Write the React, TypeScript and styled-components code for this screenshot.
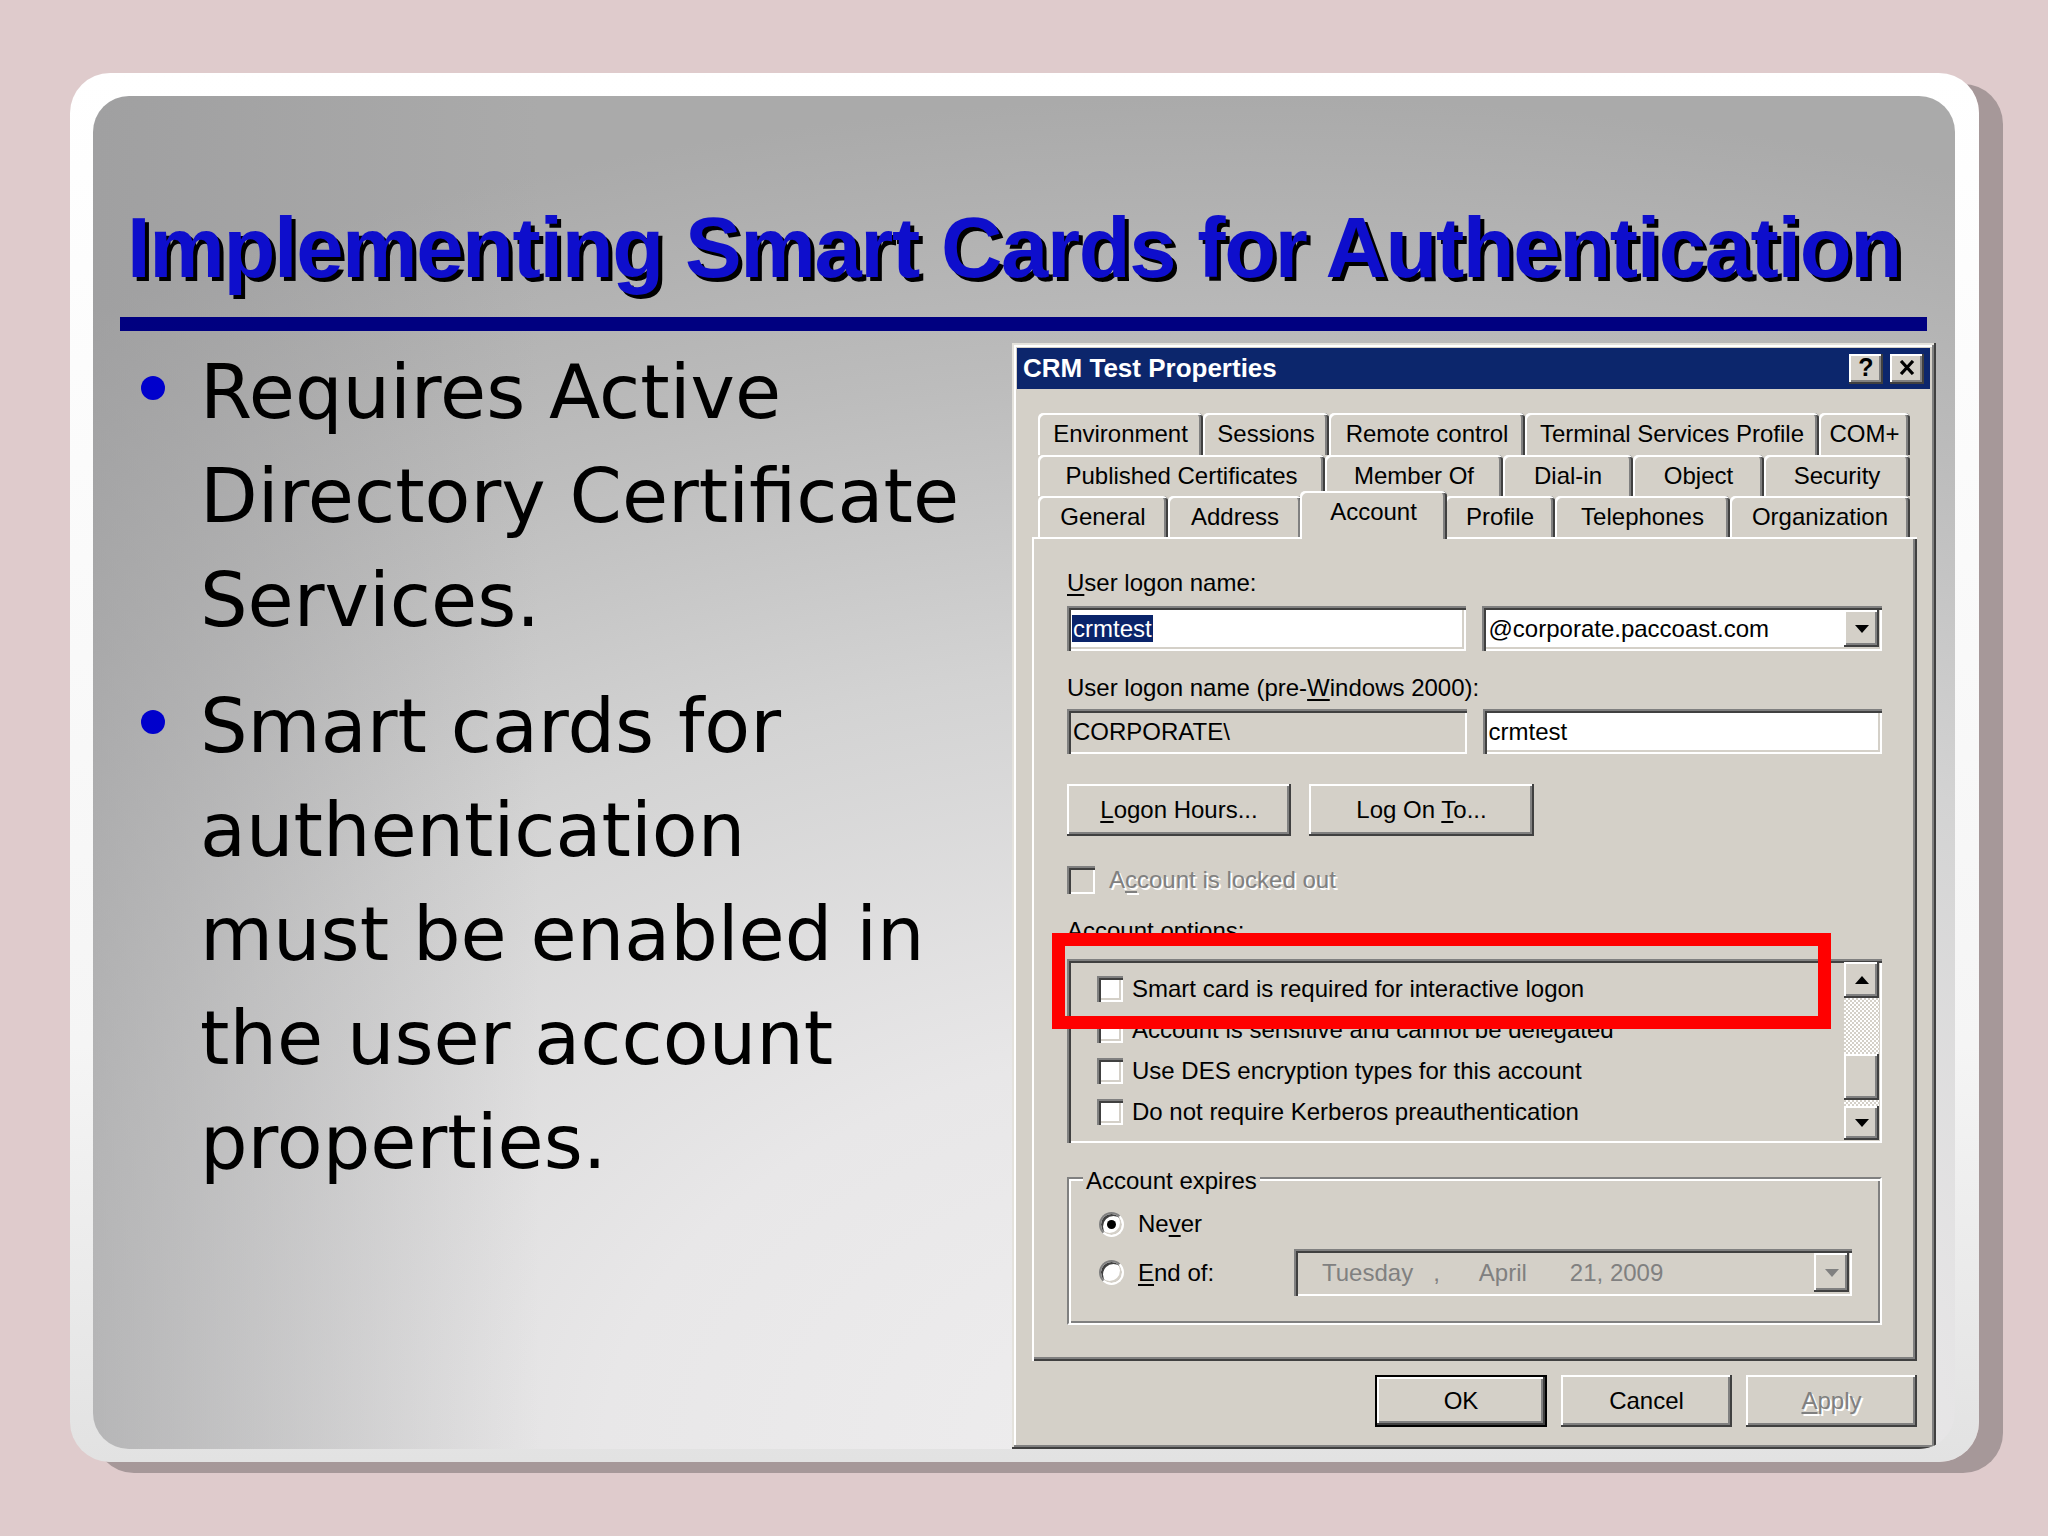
import React from "react";
import styled, { createGlobalStyle, css } from "styled-components";

const Global = createGlobalStyle`
  html, body { margin: 0; padding: 0; background: #dfcbcc; }
  * { box-sizing: border-box; }
`;

const raised = css`
  box-shadow: inset -2px -2px 0 #404040, inset 2px 2px 0 #ffffff,
    inset -4px -4px 0 #808080, inset 4px 4px 0 #d4d0c8;
`;
const sunken = css`
  box-shadow: inset 2px 2px 0 #808080, inset 4px 4px 0 #404040,
    inset -2px -2px 0 #ffffff, inset -4px -4px 0 #d4d0c8;
`;

const Page = styled.div`
  width: 2048px;
  height: 1536px;
  padding: 73px 0 0 70px;
  overflow: hidden;
  background: #dfcbcc;
`;

const Frame = styled.div`
  width: 1909px;
  height: 1389px;
  padding: 23px 24px 13px 23px;
  border-radius: 40px;
  background: linear-gradient(#ffffff, #f5f5f5 70%, #e2e2e2);
  box-shadow: 24px 11px 0 #a69899;
`;

const Slide = styled.div`
  width: 1862px;
  height: 1353px;
  border-radius: 36px;
  overflow: hidden;
  display: flex;
  flex-direction: column;
  background: linear-gradient(90deg, rgba(150, 150, 152, 0.5) 0%, rgba(150, 150, 152, 0) 24%),
    radial-gradient(ellipse 115% 100% at 62% 100%, #efeeef 0%, #e8e7e8 30%, #d3d3d3 58%, #bcbcbc 80%, #aaaaaa 100%);
`;

const Title = styled.h1`
  margin: 104px 0 0 34px;
  font-family: "Liberation Sans", Arial, sans-serif;
  font-weight: bold;
  font-size: 85px;
  line-height: 96px;
  letter-spacing: -1.4px;
  color: #0e0ecc;
  text-shadow: 4px 4px 0 #000;
  white-space: nowrap;
`;

const Rule = styled.div`
  margin: 21px 28px 0 27px;
  height: 14px;
  background: #000080;
`;

const Body = styled.div`
  display: flex;
  flex: 1;
  min-height: 0;
`;

const BulletList = styled.ul`
  list-style: none;
  margin: 9px 0 0;
  padding: 0 0 0 48px;
  width: 919px;
  flex-shrink: 0;
`;

const BulletItem = styled.li`
  display: flex;
  & + & {
    margin-top: 22px;
  }
`;

const Dot = styled.span`
  width: 24px;
  height: 24px;
  border-radius: 50%;
  background: #0000cc;
  margin: 36px 35px 0 0;
  flex-shrink: 0;
`;

const BulletText = styled.p`
  margin: 0;
  font-family: "DejaVu Sans", Verdana, sans-serif;
  font-size: 75px;
  line-height: 104px;
  color: #000;
  white-space: nowrap;
`;

const Dialog = styled.div`
  width: 924px;
  height: 1106px;
  margin-top: 12px;
  padding: 5px 6px 0 5px;
  background: #d4d0c8;
  display: flex;
  flex-direction: column;
  flex-shrink: 0;
  font-family: "Liberation Sans", Arial, sans-serif;
  font-size: 24px;
  color: #000;
  box-shadow: inset -2px -2px 0 #404040, inset 2px 2px 0 #e4e2dc,
    inset -4px -4px 0 #808080, inset 4px 4px 0 #ffffff;
`;

const TitleBar = styled.div`
  height: 41px;
  background: #0c266c;
  display: flex;
  align-items: center;
  justify-content: space-between;
  padding: 0 6px;
`;

const TitleText = styled.span`
  color: #fff;
  font-weight: bold;
  font-size: 26px;
  white-space: nowrap;
`;

const CaptionButtons = styled.div`
  display: flex;
  gap: 7px;
`;

const CaptionButton = styled.div`
  width: 34px;
  height: 30px;
  background: #d4d0c8;
  ${raised};
  display: flex;
  align-items: center;
  justify-content: center;
  font-weight: bold;
  font-size: 25px;
  line-height: 1;
  padding-bottom: 2px;
`;

const DialogBody = styled.div`
  padding: 24px 13px 0 15px;
  display: flex;
  flex-direction: column;
`;

const TabStrip = styled.div`
  margin-left: 6px;
  width: 872px;
  display: flex;
  flex-direction: column;
`;

const TabRow = styled.div<{ $h: number }>`
  display: flex;
  height: ${(p) => p.$h}px;
`;

const Tab = styled.div<{ $w: number; $selected?: boolean; $h: number }>`
  width: ${(p) => p.$w}px;
  height: ${(p) => p.$h}px;
  flex-shrink: 0;
  display: flex;
  align-items: center;
  justify-content: center;
  white-space: nowrap;
  background: #d4d0c8;
  border-radius: 5px 5px 0 0;
  box-shadow: inset 2px 2px 0 #ffffff, inset -2px 0 0 #404040, inset -4px 0 0 #808080;
  ${(p) =>
    p.$selected &&
    css`
      position: relative;
      z-index: 2;
      width: ${p.$w + 4}px;
      height: ${p.$h + 7}px;
      margin: -5px -2px -2px;
      padding-bottom: 6px;
    `}
`;

const Panel = styled.div`
  position: relative;
  height: 824px;
  padding: 31px 35px 0;
  display: flex;
  flex-direction: column;
  box-shadow: inset 2px 2px 0 #ffffff, inset -2px -2px 0 #404040, inset -4px -4px 0 #808080;
`;

const FieldLabel = styled.div<{ $mt?: number }>`
  height: 30px;
  line-height: 30px;
  margin-top: ${(p) => p.$mt ?? 0}px;
  white-space: nowrap;
`;

const Key = styled.span`
  text-decoration: underline;
  text-decoration-thickness: 2px;
  text-underline-offset: 3px;
`;

const FieldRow = styled.div<{ $mt: number }>`
  display: flex;
  gap: 16px;
  margin-top: ${(p) => p.$mt}px;
`;

const TextBox = styled.div<{ $gray?: boolean; $pl: number }>`
  flex: 1;
  height: 45px;
  display: flex;
  align-items: center;
  padding-left: ${(p) => p.$pl}px;
  padding-right: 3px;
  background: ${(p) => (p.$gray ? "#d4d0c8" : "#ffffff")};
  ${sunken};
  white-space: nowrap;
`;

const BoxText = styled.span`
  flex: 1;
`;

const Highlight = styled.span`
  background: #0a246a;
  color: #fff;
  line-height: 29px;
  padding: 0 1px;
`;

const DropButton = styled.div<{ $h: number }>`
  width: 35px;
  height: ${(p) => p.$h}px;
  background: #d4d0c8;
  ${raised};
  display: flex;
  align-items: center;
  justify-content: center;
  flex-shrink: 0;
`;

const ButtonRow = styled.div<{ $mt: number; $gap: number; $end?: boolean }>`
  display: flex;
  gap: ${(p) => p.$gap}px;
  margin-top: ${(p) => p.$mt}px;
  justify-content: ${(p) => (p.$end ? "flex-end" : "flex-start")};
`;

const PushButton = styled.div<{ $w: number; $default?: boolean; $disabled?: boolean }>`
  width: ${(p) => p.$w}px;
  height: 52px;
  display: flex;
  align-items: center;
  justify-content: center;
  background: #d4d0c8;
  white-space: nowrap;
  ${raised};
  ${(p) =>
    p.$default &&
    css`
      border: 2px solid #000;
    `}
  ${(p) =>
    p.$disabled &&
    css`
      color: #808080;
      text-shadow: 2px 2px 0 #fff;
    `}
`;

const CheckRow = styled.div<{ $mt?: number; $h: number; $gap: number }>`
  display: flex;
  align-items: center;
  height: ${(p) => p.$h}px;
  gap: ${(p) => p.$gap}px;
  margin-top: ${(p) => p.$mt ?? 0}px;
  white-space: nowrap;
`;

const CheckBox = styled.span<{ $size: number; $disabled?: boolean }>`
  width: ${(p) => p.$size}px;
  height: ${(p) => p.$size}px;
  flex-shrink: 0;
  background: ${(p) => (p.$disabled ? "#d4d0c8" : "#ffffff")};
  ${sunken};
`;

const Disabled = styled.span`
  color: #808080;
  text-shadow: 2px 2px 0 #fff;
`;

const ListBox = styled.div`
  margin-top: 13px;
  height: 184px;
  display: flex;
  background: #d4d0c8;
  ${sunken};
`;

const ListItems = styled.div`
  flex: 1;
  padding: 9px 0 0 30px;
  display: flex;
  flex-direction: column;
`;

const ScrollBar = styled.div`
  width: 35px;
  margin: 3px 3px 3px 0;
  display: flex;
  flex-direction: column;
`;

const ScrollButton = styled.div<{ $h: number }>`
  height: ${(p) => p.$h}px;
  background: #d4d0c8;
  ${raised};
  display: flex;
  align-items: center;
  justify-content: center;
  flex-shrink: 0;
`;

const ScrollTrack = styled.div<{ $h: number }>`
  height: ${(p) => p.$h}px;
  background-color: #d4d0c8;
  background-image: repeating-conic-gradient(#ffffff 0 25%, #d4d0c8 0 50%);
  background-size: 4px 4px;
`;

const GroupBox = styled.div`
  position: relative;
  margin-top: 34px;
  height: 148px;
  padding: 30px 0 0 30px;
  border-top: 2px solid #808080;
  border-left: 2px solid #808080;
  border-right: 2px solid #ffffff;
  border-bottom: 2px solid #ffffff;
  box-shadow: inset 2px 2px 0 #ffffff, inset -2px -2px 0 #808080;
  display: flex;
  flex-direction: column;
`;

const Legend = styled.span`
  position: absolute;
  top: -13px;
  left: 14px;
  padding: 0 3px;
  line-height: 30px;
  background: #d4d0c8;
  white-space: nowrap;
`;

const RadioRow = styled.div<{ $h: number; $mt?: number }>`
  display: flex;
  align-items: center;
  height: ${(p) => p.$h}px;
  margin-top: ${(p) => p.$mt ?? 0}px;
`;

const RadioOption = styled.div<{ $w?: number }>`
  display: flex;
  align-items: center;
  gap: 14px;
  width: ${(p) => (p.$w ? `${p.$w}px` : "auto")};
  flex-shrink: 0;
  white-space: nowrap;
`;

const Radio = styled.span<{ $checked?: boolean }>`
  position: relative;
  width: 25px;
  height: 25px;
  border-radius: 50%;
  flex-shrink: 0;
  background: #fff;
  border: 2px solid;
  border-color: #808080 #ffffff #ffffff #808080;
  box-shadow: inset 2px 2px 0 #404040, inset -2px -2px 0 #d4d0c8;
  &::after {
    content: "";
    display: ${(p) => (p.$checked ? "block" : "none")};
    position: absolute;
    left: 6px;
    top: 6px;
    width: 9px;
    height: 9px;
    border-radius: 50%;
    background: #000;
  }
`;

const DatePicker = styled.div`
  width: 558px;
  height: 47px;
  display: flex;
  align-items: center;
  padding: 0 3px 0 28px;
  background: #d4d0c8;
  color: #808080;
  ${sunken};
  white-space: nowrap;
`;

const DateParts = styled.div`
  flex: 1;
  display: flex;
`;

const DatePart = styled.span<{ $ml: number }>`
  margin-left: ${(p) => p.$ml}px;
`;

const RedBox = styled.div`
  position: absolute;
  left: 20px;
  top: 396px;
  width: 779px;
  height: 96px;
  border: 13px solid #ff0000;
  pointer-events: none;
`;

const Arrow = ({ dir, color = "#000" }: { dir: "up" | "down"; color?: string }) => (
  <svg width="14" height="8" viewBox="0 0 14 8">
    {dir === "down" ? <polygon points="0,0 14,0 7,8" fill={color} /> : <polygon points="0,8 14,8 7,0" fill={color} />}
  </svg>
);

const CloseGlyph = () => (
  <svg width="16" height="15" viewBox="0 0 16 15">
    <path d="M2 1 L14 14 M14 1 L2 14" stroke="#000" strokeWidth="3.2" />
  </svg>
);

const tabRows: { h: number; tabs: [string, number, boolean?][] }[] = [
  {
    h: 42,
    tabs: [
      ["Environment", 165],
      ["Sessions", 126],
      ["Remote control", 196],
      ["Terminal Services Profile", 294],
      ["COM+", 91],
    ],
  },
  {
    h: 41,
    tabs: [
      ["Published Certificates", 287],
      ["Member Of", 178],
      ["Dial-in", 130],
      ["Object", 131],
      ["Security", 146],
    ],
  },
  {
    h: 41,
    tabs: [
      ["General", 130],
      ["Address", 134],
      ["Account", 143, true],
      ["Profile", 110],
      ["Telephones", 175],
      ["Organization", 180],
    ],
  },
];

const options = [
  "Smart card is required for interactive logon",
  "Account is sensitive and cannot be delegated",
  "Use DES encryption types for this account",
  "Do not require Kerberos preauthentication",
];

export default function App() {
  return (
    <>
      <Global />
      <Page>
        <Frame>
          <Slide>
            <Title>Implementing Smart Cards for Authentication</Title>
            <Rule />
            <Body>
              <BulletList>
                <BulletItem>
                  <Dot />
                  <BulletText>
                    Requires Active
                    <br />
                    Directory Certificate
                    <br />
                    Services.
                  </BulletText>
                </BulletItem>
                <BulletItem>
                  <Dot />
                  <BulletText>
                    Smart cards for
                    <br />
                    authentication
                    <br />
                    must be enabled in
                    <br />
                    the user account
                    <br />
                    properties.
                  </BulletText>
                </BulletItem>
              </BulletList>

              <Dialog>
                <TitleBar>
                  <TitleText>CRM Test Properties</TitleText>
                  <CaptionButtons>
                    <CaptionButton>?</CaptionButton>
                    <CaptionButton>
                      <CloseGlyph />
                    </CaptionButton>
                  </CaptionButtons>
                </TitleBar>

                <DialogBody>
                  <TabStrip>
                    {tabRows.map((row, i) => (
                      <TabRow key={i} $h={row.h}>
                        {row.tabs.map(([label, w, sel]) => (
                          <Tab key={label} $w={w} $h={row.h} $selected={sel}>
                            {label}
                          </Tab>
                        ))}
                      </TabRow>
                    ))}
                  </TabStrip>

                  <Panel>
                    <FieldLabel>
                      <Key>U</Key>ser logon name:
                    </FieldLabel>
                    <FieldRow $mt={8}>
                      <TextBox $pl={5}>
                        <BoxText>
                          <Highlight>crmtest</Highlight>
                        </BoxText>
                      </TextBox>
                      <TextBox $pl={7}>
                        <BoxText>@corporate.paccoast.com</BoxText>
                        <DropButton $h={37}>
                          <Arrow dir="down" />
                        </DropButton>
                      </TextBox>
                    </FieldRow>

                    <FieldLabel $mt={22}>
                      User logon name (pre-<Key>W</Key>indows 2000):
                    </FieldLabel>
                    <FieldRow $mt={6}>
                      <TextBox $gray $pl={6}>
                        <BoxText>CORPORATE\</BoxText>
                      </TextBox>
                      <TextBox $pl={6}>
                        <BoxText>crmtest</BoxText>
                      </TextBox>
                    </FieldRow>

                    <ButtonRow $mt={30} $gap={18}>
                      <PushButton $w={224}>
                        <span>
                          <Key>L</Key>ogon Hours...
                        </span>
                      </PushButton>
                      <PushButton $w={225}>
                        <span>
                          Log On <Key>T</Key>o...
                        </span>
                      </PushButton>
                    </ButtonRow>

                    <CheckRow $mt={29} $h={30} $gap={14}>
                      <CheckBox $size={28} $disabled />
                      <Disabled>
                        A<Key>c</Key>count is locked out
                      </Disabled>
                    </CheckRow>

                    <FieldLabel $mt={21}>
                      Account <Key>o</Key>ptions:
                    </FieldLabel>
                    <ListBox>
                      <ListItems>
                        {options.map((o) => (
                          <CheckRow key={o} $h={41} $gap={9}>
                            <CheckBox $size={26} />
                            <span>{o}</span>
                          </CheckRow>
                        ))}
                      </ListItems>
                      <ScrollBar>
                        <ScrollButton $h={36}>
                          <Arrow dir="up" />
                        </ScrollButton>
                        <ScrollTrack $h={56} />
                        <ScrollButton $h={46} />
                        <ScrollTrack $h={6} />
                        <ScrollButton $h={34}>
                          <Arrow dir="down" />
                        </ScrollButton>
                      </ScrollBar>
                    </ListBox>

                    <GroupBox>
                      <Legend>Account expires</Legend>
                      <RadioRow $h={30}>
                        <RadioOption>
                          <Radio $checked />
                          <span>
                            Ne<Key>v</Key>er
                          </span>
                        </RadioOption>
                      </RadioRow>
                      <RadioRow $h={47} $mt={10}>
                        <RadioOption $w={195}>
                          <Radio />
                          <span>
                            <Key>E</Key>nd of:
                          </span>
                        </RadioOption>
                        <DatePicker>
                          <DateParts>
                            <DatePart $ml={0}>Tuesday</DatePart>
                            <DatePart $ml={20}>,</DatePart>
                            <DatePart $ml={39}>April</DatePart>
                            <DatePart $ml={43}>21, 2009</DatePart>
                          </DateParts>
                          <DropButton $h={39}>
                            <Arrow dir="down" color="#808080" />
                          </DropButton>
                        </DatePicker>
                      </RadioRow>
                    </GroupBox>

                    <RedBox />
                  </Panel>

                  <ButtonRow $mt={14} $gap={14} $end>
                    <PushButton $w={172} $default>
                      OK
                    </PushButton>
                    <PushButton $w={171}>Cancel</PushButton>
                    <PushButton $w={171} $disabled>
                      <span>
                        <Key>A</Key>pply
                      </span>
                    </PushButton>
                  </ButtonRow>
                </DialogBody>
              </Dialog>
            </Body>
          </Slide>
        </Frame>
      </Page>
    </>
  );
}
